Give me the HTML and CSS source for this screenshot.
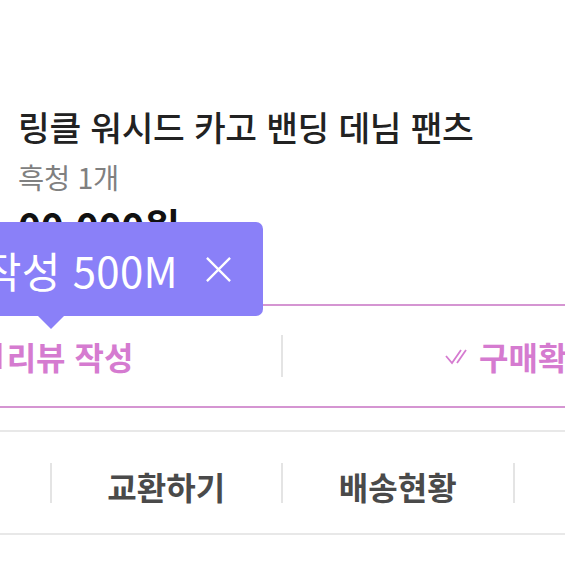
FILE: index.html
```html
<!DOCTYPE html>
<html lang="ko">
<head>
  <meta charset="UTF-8">
  <title>주문 상세</title>
  <link rel="stylesheet" href="styles.css">
</head>
<body>
  <div class="product">
    <h1 class="name">링클 워시드 카고 밴딩 데님 팬츠</h1>
    <p class="option">흑청 1개</p>
    <p class="price">00,000원</p>
  </div>

  <div class="actions">
    <!-- main buttons -->
    <div class="primary-row">
      <button class="primary-btn">
        <svg class="pen" width="36" height="30" viewBox="0 0 36 30">
          <path d="M4 26 L6 19 L20 5 L26 11 L12 25 Z" fill="none" stroke="#d57bd0" stroke-width="3"/>
          <path d="M34 2 V28" stroke="#d57bd0" stroke-width="3"/>
        </svg>
        리뷰 작성
      </button>
      <button class="primary-btn confirm">
        <svg class="check" width="27" height="19" viewBox="0 0 27 19">
          <path d="M2 9 L8 16 L17 3" fill="none" stroke="#d57bd0" stroke-width="1.8"/>
          <path d="M13 16 L22 3" fill="none" stroke="#d57bd0" stroke-width="1.8"/>
        </svg>
        구매확정
      </button>
    </div>

    <!-- tooltip over review button -->
    <div class="tooltip">
      <span class="tooltip-text">리뷰 작성 500M</span>
      <svg class="close" width="28" height="28" viewBox="0 0 28 28">
        <path d="M2 2 L26 26 M26 2 L2 26" stroke="#fff" stroke-width="2.4"/>
      </svg>
    </div>

    <!-- secondary buttons -->
    <div class="secondary-row">
      <button class="secondary-btn">취소하기</button>
      <button class="secondary-btn">교환하기</button>
      <button class="secondary-btn">배송현황</button>
      <button class="secondary-btn">반품하기</button>
    </div>
  </div>
</body>
</html>
```

FILE: styles.css
```css
body {
  font-family: "Noto Sans CJK KR", "Noto Sans", sans-serif;
  background: #fff;
  margin: 0;
  padding: 0;
  overflow: hidden;
}
.product {
  padding: 104px 18px 58px;
}
.name {
  margin: 0;
  font-size: 34.5px;
  font-weight: 500;
  line-height: 45px;
  color: #222;
  letter-spacing: -0.3px;
}
.option {
  margin: 8px 0 0;
  font-size: 28.5px;
  line-height: 40px;
  color: #808080;
  letter-spacing: -0.3px;
}
.price {
  margin: 7px 0 0;
  font-size: 39px;
  font-weight: 700;
  line-height: 42px;
  color: #111;
  letter-spacing: -0.3px;
}
.actions {
  position: relative;
  margin-left: -182px;
  width: 926px;
}
.primary-row {
  display: grid;
  grid-template-columns: 1fr 1fr;
  border-top: 2px solid #d595d2;
  border-bottom: 2px solid #d595d2;
  height: 100px;
  align-items: center;
}
.primary-row .primary-btn + .primary-btn {
  border-left: 2px solid #e4e4e4;
}
button {
  font-family: inherit;
  background: none;
  border: none;
  padding: 0;
  cursor: pointer;
}
.primary-btn {
  height: 42px;
  display: flex;
  align-items: center;
  justify-content: center;
  gap: 5px;
  font-size: 32px;
  font-weight: 700;
  color: #d57bd0;
}
.primary-btn.confirm {
  gap: 8px;
  padding-left: 14px;
}
.tooltip {
  position: absolute;
  right: 481px;
  top: -82px;
  height: 94px;
  display: flex;
  align-items: center;
  gap: 27px;
  padding: 0 31px 0 60px;
  background: #8a80f8;
  border-radius: 7px;
  color: #fff;
  font-size: 42px;
  letter-spacing: 0.3px;
}
.tooltip::after {
  content: "";
  position: absolute;
  right: 198px;
  bottom: -13px;
  border-left: 14px solid transparent;
  border-right: 14px solid transparent;
  border-top: 14px solid #8a80f8;
}
.close {
  width: 27px;
  height: 27px;
}
.secondary-row {
  display: grid;
  grid-template-columns: repeat(4, 1fr);
  margin-top: 22px;
  border-top: 2px solid #e8e8e8;
  border-bottom: 2px solid #e8e8e8;
  height: 101px;
  align-items: center;
}
.secondary-btn {
  height: 40px;
  font-size: 32px;
  font-weight: 700;
  color: #4a4a4a;
}
.secondary-btn + .secondary-btn {
  border-left: 2px solid #e4e4e4;
}
```
